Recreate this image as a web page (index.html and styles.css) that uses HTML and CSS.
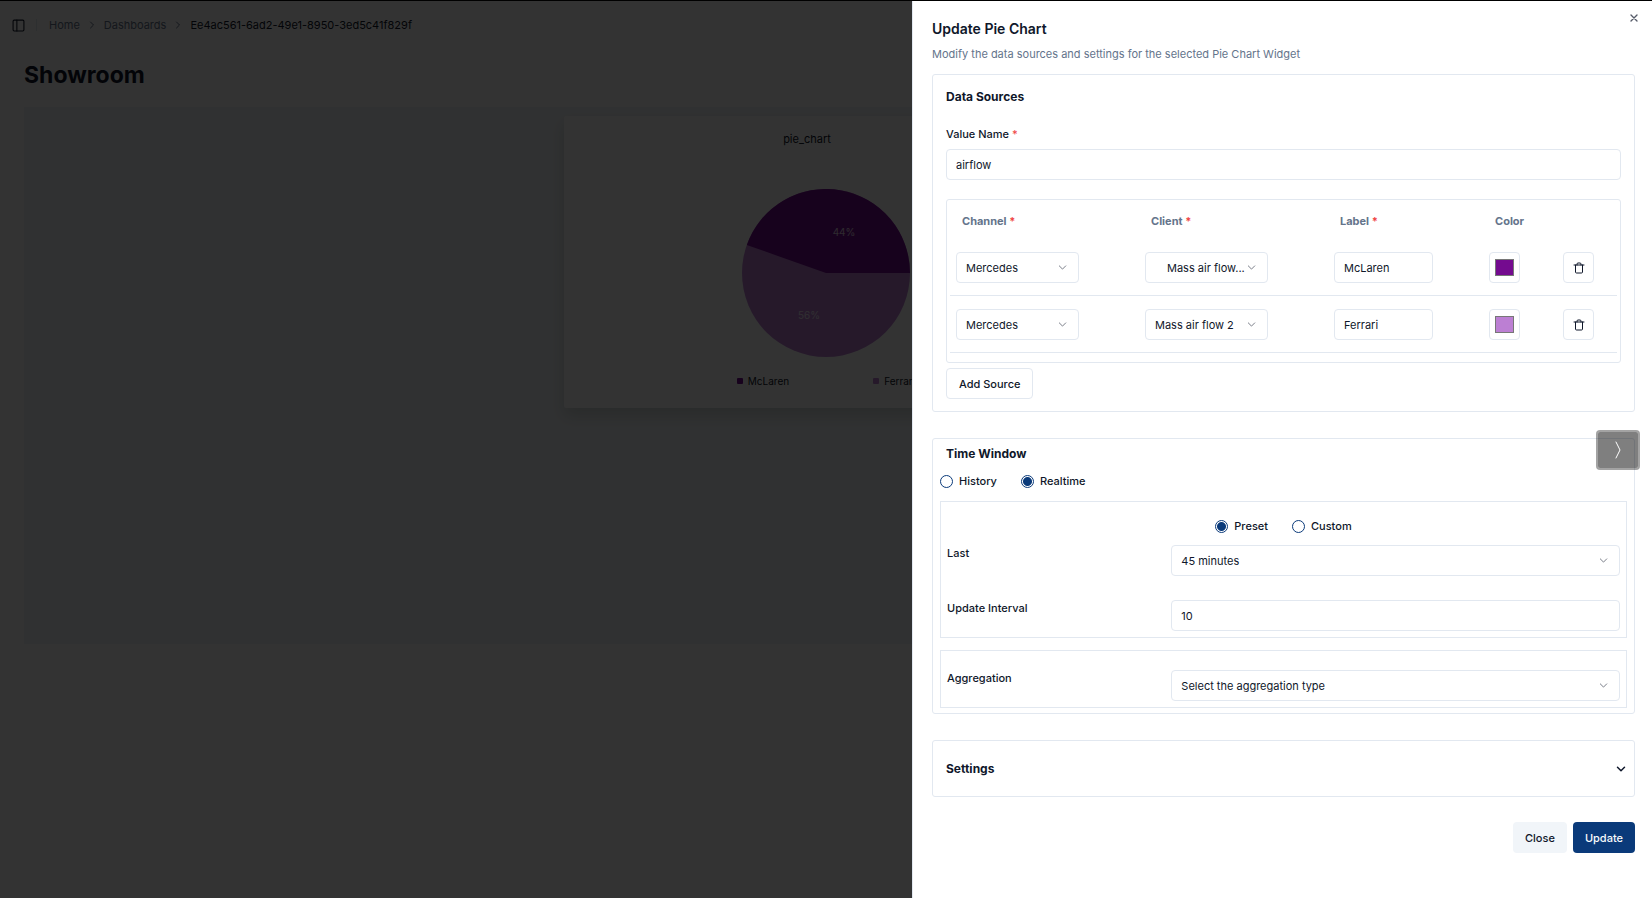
FILE: index.html
```html
<!DOCTYPE html>
<html lang="en">
<head>
<meta charset="utf-8">
<title>Showroom</title>
<link rel="stylesheet" href="styles.css">
</head>
<body>
<svg class="defs" aria-hidden="true">
  <symbol id="chevron-down" viewBox="0 0 24 24"><path d="m5 8.500 7 7 7-7"/></symbol>
  <symbol id="chevron-right" viewBox="0 0 24 24"><path d="m9 18 6-6-6-6"/></symbol>
  <symbol id="trash" viewBox="0 0 24 24"><path d="M2 6h20M19 6v14a2 2 0 0 1-2 2H7a2 2 0 0 1-2-2V6M8 6V4a2 2 0 0 1 2-2h4a2 2 0 0 1 2 2v2"/></symbol>
</svg>

<div class="page">
  <header class="topbar">
    <button class="icon-button" type="button" aria-label="Toggle sidebar">
      <svg class="icon icon-sidebar" viewBox="0 0 24 24"><rect x="2" y="2" width="20" height="20" rx="2"/><path d="M9 2v20"/></svg>
    </button>
    <span class="separator"></span>
    <nav class="breadcrumb" aria-label="Breadcrumb">
      <a href="#">Home</a>
      <svg class="icon icon-crumb"><use href="#chevron-right"/></svg>
      <a href="#">Dashboards</a>
      <svg class="icon icon-crumb"><use href="#chevron-right"/></svg>
      <span class="current">Ee4ac561-6ad2-49e1-8950-3ed5c41f829f</span>
    </nav>
  </header>
  <main class="main">
    <h1 class="page-title">Showroom</h1>
    <div class="canvas">
      <article class="widget">
        <h2 class="widget-title">pie_chart</h2>
        <svg class="pie" viewBox="-84 -84 168 168">
          <circle class="slice-light" r="84"/>
          <path class="slice-dark" d="M0 0 84 0A84 84 0 0 0 -79.200 -28Z"/>
          <text x="18" y="-37">44%</text>
          <text x="-17" y="46">56%</text>
        </svg>
        <ul class="legend">
          <li><span class="key key-dark"></span>McLaren</li>
          <li><span class="key key-light"></span>Ferrari</li>
        </ul>
      </article>
    </div>
  </main>
</div>
<div class="overlay"></div>

<aside class="sheet" role="dialog" aria-labelledby="sheet-title">
  <button class="sheet-close" type="button" aria-label="Close panel">
    <svg class="icon icon-close" viewBox="0 0 24 24"><path d="M3 3 21 21M21 3 3 21"/></svg>
  </button>
  <h2 class="sheet-title" id="sheet-title">Update Pie Chart</h2>
  <p class="sheet-text">Modify the data sources and settings for the selected Pie Chart Widget</p>

  <form class="form">
    <section class="card sources">
      <h3 class="card-title">Data Sources</h3>
      <label class="label" for="value-name">Value Name <span class="required">*</span></label>
      <input class="control" id="value-name" type="text" value="airflow">
      <div class="table-frame">
        <table class="table">
          <colgroup><col class="col-wide"><col class="col-wide"><col class="col-label"><col class="col-color"><col></colgroup>
          <thead>
            <tr>
              <th>Channel <span class="required">*</span></th>
              <th>Client <span class="required">*</span></th>
              <th>Label <span class="required">*</span></th>
              <th>Color</th>
              <th></th>
            </tr>
          </thead>
          <tbody>
            <tr>
              <td><div class="select select-small"><select class="control" aria-label="Channel 1"><option>Mercedes</option></select><svg class="icon icon-select"><use href="#chevron-down"/></svg></div></td>
              <td><div class="select select-small select-truncated"><select class="control" aria-label="Client 1"><option>Mass air flow...</option></select><svg class="icon icon-select"><use href="#chevron-down"/></svg></div></td>
              <td><input class="control control-label" type="text" value="McLaren" aria-label="Label 1"></td>
              <td><input class="color" type="color" value="#740b8f" aria-label="Color 1"></td>
              <td><button class="delete" type="button" aria-label="Delete source 1"><svg class="icon icon-trash"><use href="#trash"/></svg></button></td>
            </tr>
            <tr>
              <td><div class="select select-small"><select class="control" aria-label="Channel 2"><option>Mercedes</option></select><svg class="icon icon-select"><use href="#chevron-down"/></svg></div></td>
              <td><div class="select select-small"><select class="control" aria-label="Client 2"><option>Mass air flow 2</option></select><svg class="icon icon-select"><use href="#chevron-down"/></svg></div></td>
              <td><input class="control control-label" type="text" value="Ferrari" aria-label="Label 2"></td>
              <td><input class="color" type="color" value="#bc7fd3" aria-label="Color 2"></td>
              <td><button class="delete" type="button" aria-label="Delete source 2"><svg class="icon icon-trash"><use href="#trash"/></svg></button></td>
            </tr>
          </tbody>
        </table>
      </div>
      <button class="button button-outline" type="button">Add Source</button>
    </section>

    <section class="card window">
      <h3 class="card-title">Time Window</h3>
      <div class="radios" role="radiogroup" aria-label="Time window">
        <label class="radio"><input type="radio" name="window">History</label>
        <label class="radio"><input type="radio" name="window" checked>Realtime</label>
      </div>
      <div class="box">
        <div class="radios radios-center" role="radiogroup" aria-label="Range">
          <label class="radio"><input type="radio" name="range" checked>Preset</label>
          <label class="radio"><input type="radio" name="range">Custom</label>
        </div>
        <div class="field">
          <label class="label" for="last">Last</label>
          <div class="select"><select class="control" id="last"><option>45 minutes</option></select><svg class="icon icon-select"><use href="#chevron-down"/></svg></div>
        </div>
        <div class="field">
          <label class="label" for="interval">Update Interval</label>
          <input class="control" id="interval" type="text" inputmode="numeric" value="10">
        </div>
      </div>
      <div class="box box-aggregation">
        <div class="field">
          <label class="label" for="aggregation">Aggregation</label>
          <div class="select"><select class="control" id="aggregation"><option>Select the aggregation type</option></select><svg class="icon icon-select"><use href="#chevron-down"/></svg></div>
        </div>
      </div>
    </section>

    <section class="card">
      <button class="accordion" type="button" aria-expanded="false">Settings<svg class="icon icon-accordion"><use href="#chevron-down"/></svg></button>
    </section>

    <div class="actions">
      <button class="button button-muted" type="button">Close</button>
      <button class="button button-primary" type="submit">Update</button>
    </div>
  </form>
</aside>

<button class="float" type="button" aria-label="Next">
  <svg class="icon icon-float" viewBox="0 0 8 18"><path d="M2 1 6 9 2 17"/></svg>
</button>
</body>
</html>
```
FILE: styles.css
```css
:root {
  --ink: #0f172a;
  --muted: #64748b;
  --line: #e2e8f0;
  --primary: #0a3a7a;
}

* {
  box-sizing: border-box;
}

body {
  margin: 0;
  min-height: 100vh;
  border-top: 1px solid #000;
  background: #fff;
  color: var(--ink);
  font: 11px/16px Inter, "Liberation Sans", sans-serif;
}

h1, h2, h3, p, ul {
  margin: 0;
  padding: 0;
}

button, input, select {
  margin: 0;
  color: inherit;
  font: inherit;
}

.defs {
  position: absolute;
  width: 0;
  height: 0;
}

.icon {
  display: block;
  flex: none;
  fill: none;
  stroke: currentColor;
  stroke-width: 2;
  stroke-linecap: round;
  stroke-linejoin: round;
}

/* Dashboard page */

.topbar {
  display: flex;
  align-items: center;
  height: 48px;
  padding: 0 12px;
}

.icon-button {
  padding: 0;
  border: 0;
  background: none;
}

.icon-sidebar {
  width: 13px;
  height: 13px;
}

.separator {
  width: 1px;
  height: 12px;
  margin: 0 12px 0 11px;
  background: var(--line);
}

.breadcrumb {
  display: flex;
  align-items: center;
  gap: 6px;
}

.breadcrumb a {
  color: var(--muted);
  text-decoration: none;
}

.icon-crumb {
  width: 12px;
  height: 12px;
  color: var(--muted);
}

.main {
  padding: 10px 24px 24px;
}

.page-title {
  font-size: 23px;
  line-height: 32px;
}

.canvas {
  display: grid;
  grid-template-columns: repeat(3, 1fr);
  align-items: start;
  min-height: 537px;
  margin-top: 16px;
  background: #f1f5f9;
}

.widget {
  display: flex;
  grid-column: 2;
  flex-direction: column;
  align-items: center;
  height: 292px;
  margin: 9px 5px;
  padding-top: 15px;
  border-radius: 2px;
  background: #fff;
  box-shadow: 0 8px 16px rgba(20, 50, 20, 0.16);
}

.widget-title {
  padding-right: 38px;
  font-size: 11px;
  font-weight: 400;
}

.pie {
  width: 168px;
  height: 168px;
  margin-top: 42px;
}

.pie text {
  fill: #fff;
  font-size: 10px;
  text-anchor: middle;
  opacity: 0.8;
}

.slice-dark, .key-dark {
  fill: #740b8f;
  background: #740b8f;
}

.slice-light, .key-light {
  fill: #bc7fd3;
  background: #bc7fd3;
}

.legend {
  display: flex;
  gap: 84px;
  margin-top: 16px;
  font-size: 10px;
  list-style: none;
}

.legend li {
  display: flex;
  align-items: center;
  gap: 5px;
}

.key {
  width: 6px;
  height: 6px;
  border-radius: 1px;
}

.overlay {
  position: fixed;
  inset: 1px 0 0;
  background: rgba(0, 0, 0, 0.8);
}

/* Side sheet */

.sheet {
  position: fixed;
  inset: 1px 0 0 auto;
  width: 740px;
  max-width: 100%;
  padding: 18px 17px 18px 19px;
  overflow: auto;
  border-left: 1px solid var(--line);
  background: #fff;
}

.sheet-close {
  position: absolute;
  top: 11px;
  right: 12px;
  padding: 0;
  border: 0;
  background: none;
  opacity: 0.7;
}

.icon-close {
  width: 12px;
  height: 12px;
  padding: 2px;
  stroke-width: 4;
}

.sheet-title {
  font-size: 14px;
  font-weight: 600;
  line-height: 20px;
}

.sheet-text {
  margin-top: 7px;
  color: var(--muted);
}

.form {
  display: flex;
  flex-direction: column;
  gap: 26px;
  margin-top: 12px;
}

.card {
  border: 1px solid var(--line);
  border-radius: 3px;
}

.sources {
  padding: 12px 13px;
}

.card-title {
  font-size: 12px;
  font-weight: 700;
  line-height: 20px;
}

.label {
  display: block;
  font-weight: 500;
}

.required {
  color: #ef4444;
}

.sources .label {
  margin: 19px 0 7px;
}

.control {
  display: block;
  width: 100%;
  height: 31px;
  padding: 0 9px;
  border: 1px solid var(--line);
  border-radius: 4px;
  background: #fff;
  appearance: none;
}

.select {
  position: relative;
}

.icon-select {
  position: absolute;
  top: 10px;
  right: 11px;
  width: 11px;
  height: 11px;
  opacity: 0.6;
  pointer-events: none;
}

.select-small {
  width: 123px;
}

.select-truncated .control {
  padding-left: 21px;
}

.table-frame {
  margin: 19px 0 5px;
  padding: 3px 3px 9px;
  border: 1px solid var(--line);
  border-radius: 3px;
}

.table {
  width: 100%;
  border-collapse: separate;
  border-spacing: 0;
  table-layout: fixed;
}

.col-wide {
  width: 189px;
}

.col-label {
  width: 155px;
}

.col-color {
  width: 74px;
}

.table th {
  height: 36px;
  padding: 0 12px;
  color: var(--muted);
  font-weight: 700;
  text-align: left;
}

.table td {
  padding: 13px 6px 12px;
  border-bottom: 1px solid var(--line);
}

.control-label {
  width: 99px;
}

.color, .delete {
  display: block;
  width: 31px;
  height: 31px;
  padding: 6px 5px;
  border: 1px solid var(--line);
  border-radius: 4px;
  background: #fff;
}

.color::-webkit-color-swatch-wrapper {
  padding: 0;
}

.color::-webkit-color-swatch {
  border: 1px solid #777;
}

.delete {
  display: grid;
  place-items: center;
}

.icon-trash {
  width: 12px;
  height: 12px;
}

.button {
  height: 31px;
  padding: 0 11px;
  border: 1px solid transparent;
  border-radius: 4px;
  font-weight: 500;
}

.button-outline {
  padding: 0 12px;
  border-color: var(--line);
  background: #fff;
}

.button-muted {
  background: #f1f5f9;
}

.button-primary {
  background: var(--primary);
  color: #f8fafc;
}

.window {
  padding: 5px 7px;
}

.window .card-title {
  padding-left: 6px;
}

.radios {
  display: flex;
  gap: 24px;
  margin-top: 9px;
}

.radios-center {
  justify-content: center;
  margin-top: 0;
}

.radio {
  display: flex;
  align-items: center;
  gap: 6px;
  font-weight: 500;
}

.radio input {
  width: 13px;
  height: 13px;
  border: 1px solid var(--primary);
  border-radius: 50%;
  appearance: none;
}

.radio input:checked {
  padding: 2px;
  background: radial-gradient(circle, var(--primary) 4px, transparent 5px);
}

.box {
  margin-top: 12px;
  padding: 16px 6px 6px;
  border: 1px solid var(--line);
}

.box-aggregation {
  padding-top: 8px;
}

.field {
  display: grid;
  grid-template-columns: 1fr 2fr;
  align-items: start;
  margin-top: 11px;
}

.field + .field {
  margin-top: 24px;
}

.accordion {
  display: flex;
  align-items: center;
  justify-content: space-between;
  width: 100%;
  height: 55px;
  padding: 0 7px 0 13px;
  border: 0;
  background: none;
  font-size: 12px;
  font-weight: 700;
}

.icon-accordion {
  width: 12px;
  height: 12px;
  stroke-width: 3;
}

.actions {
  display: flex;
  justify-content: flex-end;
  gap: 6px;
  margin-top: -1px;
}

.float {
  position: fixed;
  top: 430px;
  right: 12px;
  display: grid;
  width: 44px;
  height: 40px;
  padding: 0;
  place-items: center;
  border: 2px solid rgba(0, 0, 0, 0.36);
  border-radius: 4px;
  background: rgba(0, 0, 0, 0.5) padding-box;
}

.icon-float {
  width: 8px;
  height: 18px;
  color: #fff;
  stroke-width: 1;
}
```
